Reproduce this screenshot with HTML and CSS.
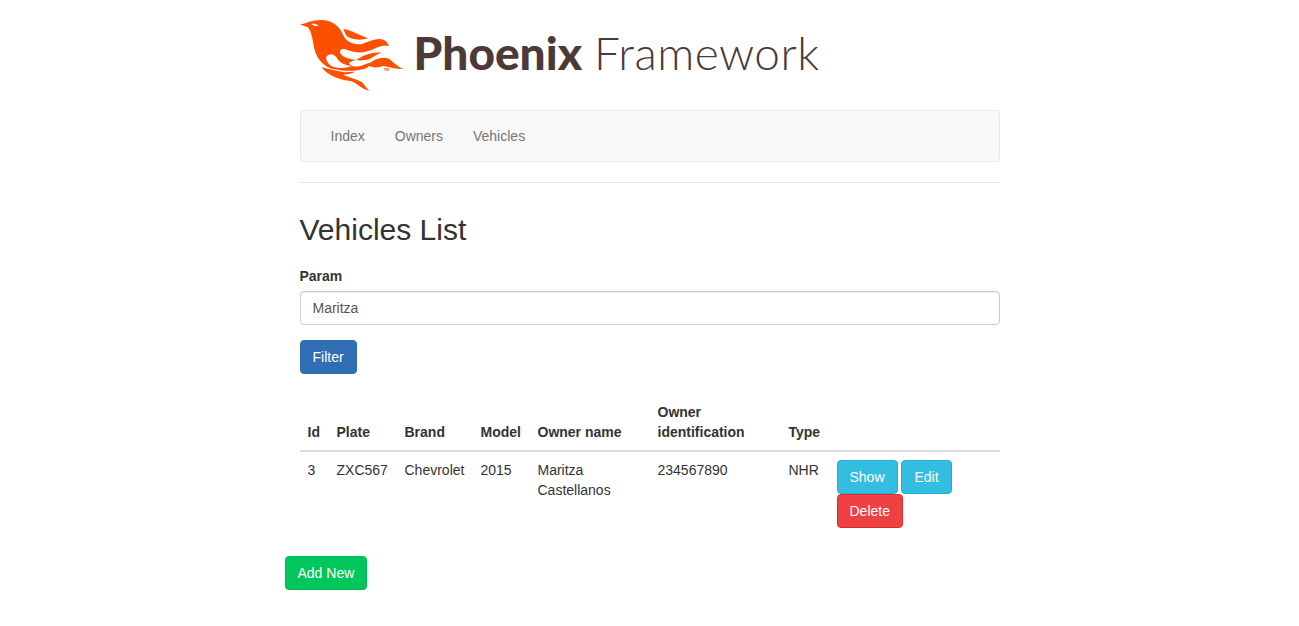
FILE: index.html
```html
<!DOCTYPE html>
<html lang="en">
<head>
    <meta charset="UTF-8">
    <meta name="viewport" content="width=device-width, initial-scale=1.0">
    <title>Vehicles List</title>
    <link rel="stylesheet" href="styles.css">
</head>
<body>
    <div class="container">
        <header class="logo">
            <svg class="logo-bird" viewBox="30 24 315 222" width="105" height="74" aria-hidden="true">
                <path fill="#fd4f00" d="M30 44 C48 40 66 29 98 30 C128 32 150 50 160 76 C168 96 190 106 216 102 C240 94 262 82 282 90 C290 94 295 102 297 108 C278 102 262 112 244 120 C222 130 196 130 172 120 C158 114 150 118 150 126 C152 138 170 146 198 150 C180 156 168 158 186 168 C200 172 212 168 222 164 C232 160 240 158 250 160 C236 168 228 178 218 178 C188 186 150 182 126 176 C104 170 82 150 74 120 C68 94 66 68 54 52 C46 48 38 46 30 44 Z"/>
                <path fill="#fd4f00" d="M160 57 C184 60 208 76 234 85 C212 92 182 90 168 76 Z"/>
                <path fill="#fd4f00" d="M198 150 C216 138 244 124 274 128 C258 134 248 142 238 148 C222 152 210 152 198 150 Z"/>
                <path fill="#fd4f00" d="M232 166 C250 148 276 138 296 146 C306 150 322 172 340 176 C318 180 300 170 280 168 C264 174 248 174 232 166 Z"/>
                <path fill="#fd4f00" d="M94 172 C116 176 136 184 160 186 C178 188 186 184 194 186 C182 192 170 194 160 194 C172 202 200 206 216 216 C224 226 230 236 238 242 C214 238 206 222 184 214 C150 210 116 198 94 172 Z"/>
                <path fill="#ffffff" d="M108 142 C116 128 134 130 142 146 C150 158 166 166 186 168 C166 176 138 176 124 168 C114 162 108 152 108 142 Z"/>
                <path fill="#ffffff" d="M64 42 C72 40 80 42 86 46 C78 50 70 48 64 42 Z"/>
                <text class="logo-tm" x="281" y="182">TM</text>
            </svg>
            <div class="logo-text"><b>Phoenix</b> <span>Framework</span></div>
        </header>

        <nav class="navbar">
            <a href="#">Index</a>
            <a href="#">Owners</a>
            <a href="#">Vehicles</a>
        </nav>

        <hr>

        <h2>Vehicles List</h2>

        <form class="filter">
            <div class="form-group">
                <label for="param">Param</label>
                <input id="param" type="text" value="Maritza">
            </div>
            <button type="button" class="btn btn-primary">Filter</button>
        </form>

        <table class="table">
            <thead>
                <tr>
                    <th class="col-id">Id</th>
                    <th class="col-plate">Plate</th>
                    <th class="col-brand">Brand</th>
                    <th class="col-model">Model</th>
                    <th class="col-name">Owner name</th>
                    <th class="col-ident">Owner identification</th>
                    <th class="col-type">Type</th>
                    <th class="col-actions"></th>
                </tr>
            </thead>
            <tbody>
                <tr>
                    <td>3</td>
                    <td>ZXC567</td>
                    <td>Chevrolet</td>
                    <td>2015</td>
                    <td>Maritza Castellanos</td>
                    <td>234567890</td>
                    <td>NHR</td>
                    <td>
                        <a href="#" class="btn btn-info">Show</a>
                        <a href="#" class="btn btn-info">Edit</a>
                        <a href="#" class="btn btn-danger">Delete</a>
                    </td>
                </tr>
            </tbody>
        </table>

        <a href="#" class="btn btn-success add-new">Add New</a>
    </div>
</body>
</html>
```

FILE: styles.css
```css
* {
    box-sizing: border-box;
}

body {
    font-family: "Liberation Sans", Arial, sans-serif;
    font-size: 14px;
    line-height: 20px;
    margin: 0;
    color: #333;
    background-color: #fff;
}

.container {
    width: 730px;
    margin: 0 auto;
    padding: 0 15px;
}

.logo {
    display: flex;
    align-items: flex-start;
    gap: 9px;
    height: 92px;
    padding-top: 18px;
    margin-bottom: 18px;
    color: #4c3a39;
}

.logo-bird {
    flex: none;
}

.logo-tm {
    font-size: 11px;
    font-weight: bold;
    fill: #fd4f00;
}

.logo-text {
    font-family: Lato, sans-serif;
    font-size: 46px;
    line-height: 56px;
    white-space: nowrap;
    margin-top: 7px;
}

.logo-text b {
    font-weight: 900;
}

.logo-text span {
    font-weight: 300;
    letter-spacing: .45px;
}

.navbar {
    display: flex;
    height: 52px;
    padding: 0 15px;
    margin-bottom: 20px;
    background-color: #f8f8f8;
    border: 1px solid #e7e7e7;
    border-radius: 4px;
}

.navbar a {
    padding: 15px;
    color: #777;
    text-decoration: none;
}

hr {
    height: 1px;
    margin: 20px 0;
    border: 0;
    background-color: #e3e3e3;
}

h2 {
    font-size: 30px;
    font-weight: 500;
    line-height: 33px;
    margin: 30px 0 20px;
}

.form-group {
    margin-bottom: 15px;
}

label {
    display: block;
    font-weight: bold;
    margin-bottom: 5px;
}

input {
    display: block;
    width: 100%;
    height: 34px;
    padding: 6px 12px;
    font: inherit;
    color: #555;
    background-color: #fff;
    border: 1px solid #ccc;
    border-radius: 4px;
    box-shadow: inset 0 1px 1px rgba(0, 0, 0, .075);
}

.btn {
    display: inline-block;
    padding: 6px 12px;
    font: inherit;
    color: #fff;
    text-decoration: none;
    white-space: nowrap;
    border: 1px solid transparent;
    border-radius: 4px;
}

.btn-primary {
    background-color: #2f6db5;
    border-color: #2e6da4;
}

.btn-info {
    background-color: #33bde0;
    border-color: #20b2d6;
}

.btn-danger {
    background-color: #ef4144;
    border-color: #dd2c30;
}

.btn-success {
    background-color: #00c65c;
    border-color: #00bd57;
}

.table {
    width: 100%;
    margin: 20px 0;
    border-collapse: collapse;
    border-spacing: 0;
    table-layout: fixed;
}

.table th,
.table td {
    padding: 8px;
    text-align: left;
    vertical-align: top;
}

.table th {
    vertical-align: bottom;
    border-bottom: 2px solid #ddd;
}

.col-id { width: 29px; }
.col-plate { width: 68px; }
.col-brand { width: 76px; }
.col-model { width: 57px; }
.col-name { width: 120px; }
.col-ident { width: 131px; }
.col-type { width: 48px; }
.col-actions { width: 171px; }

.add-new {
    margin-left: -15px;
}
```
